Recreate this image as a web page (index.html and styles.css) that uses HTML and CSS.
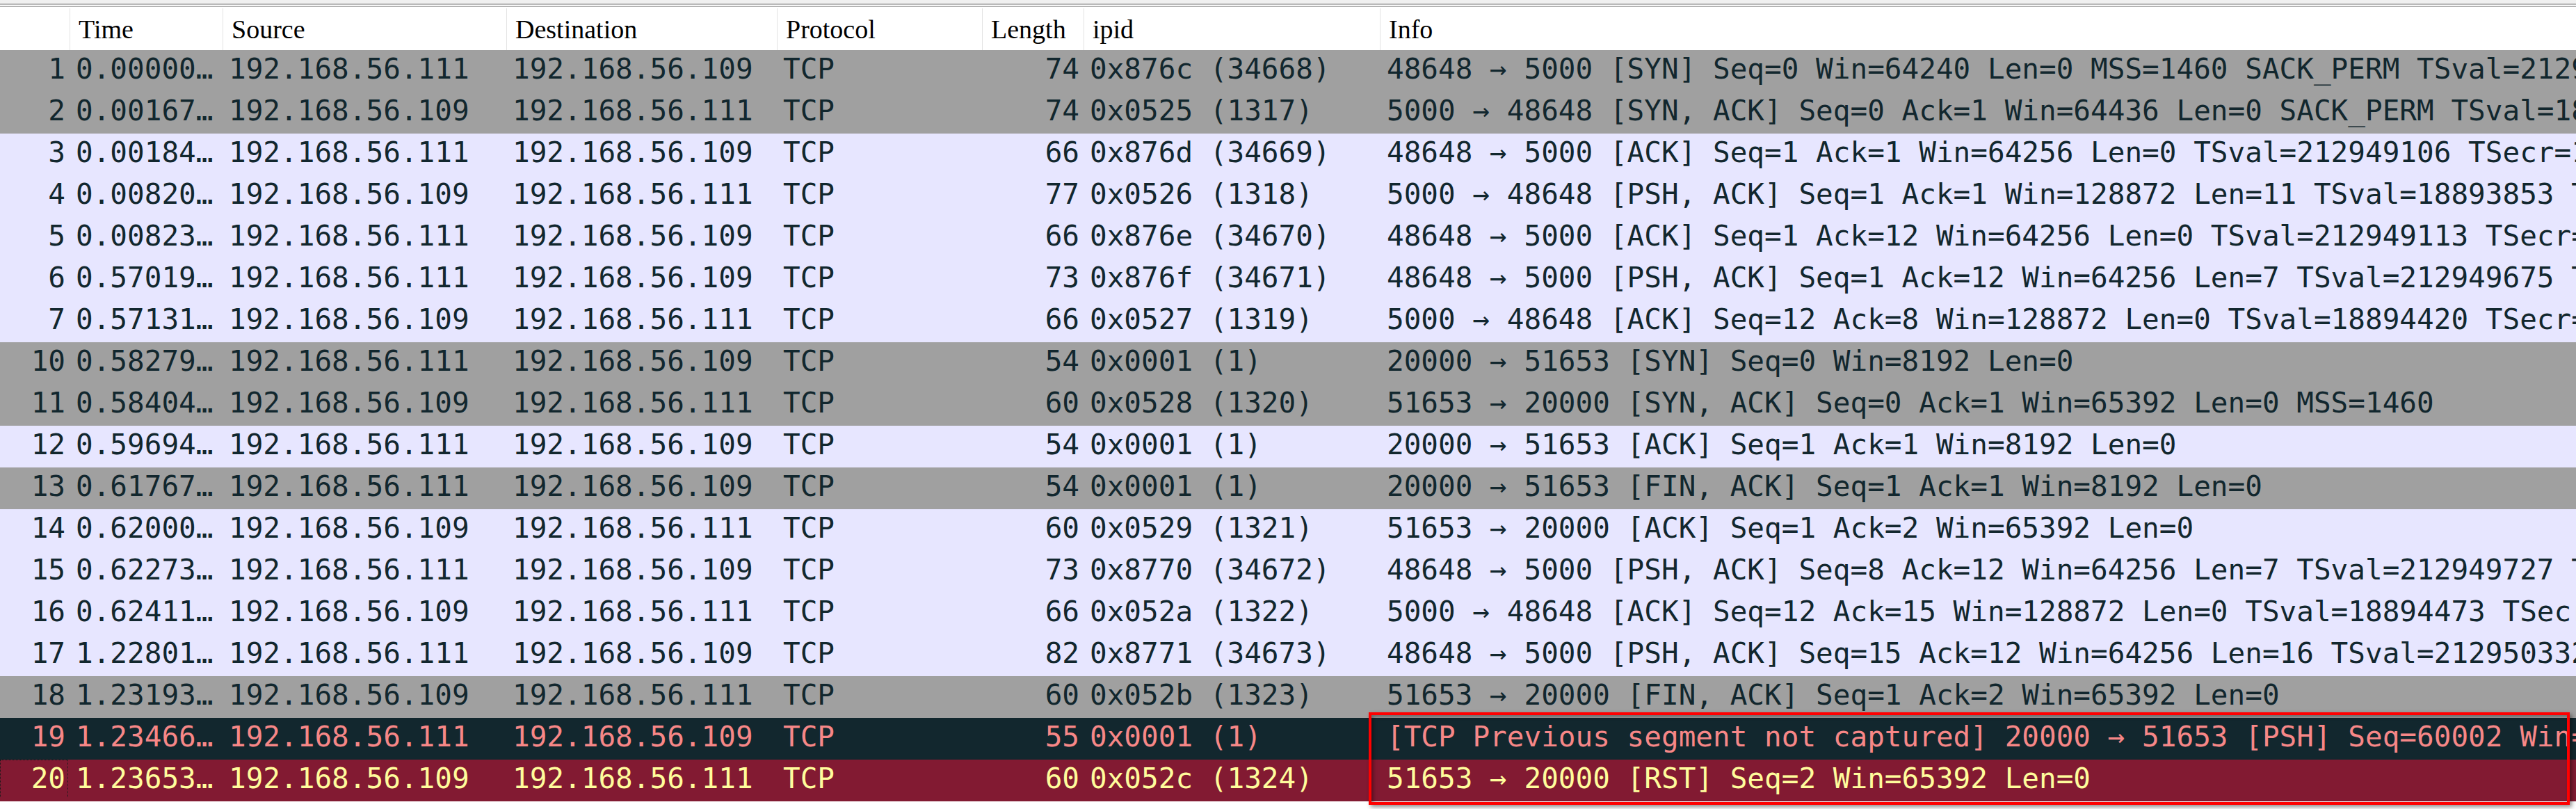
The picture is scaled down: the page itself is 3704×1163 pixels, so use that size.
FILE: index.html
```html
<!DOCTYPE html>
<html>
<head>
<meta charset="utf-8">
<link rel="stylesheet" href="styles.css">
</head>
<body>
<div class="pane">
  <div class="chrome"></div>
  <div class="chrome2"></div>
  <div class="head">
    <div class="hc"></div>
    <div class="hc">Time</div>
    <div class="hc">Source</div>
    <div class="hc">Destination</div>
    <div class="hc">Protocol</div>
    <div class="hc">Length</div>
    <div class="hc">ipid</div>
    <div class="hc last">Info</div>
  </div>
  <div class="list">
    <div class="row syn"><span class="c num">1</span><span class="c">0.00000…</span><span class="c">192.168.56.111</span><span class="c">192.168.56.109</span><span class="c">TCP</span><span class="c num">74</span><span class="c">0x876c (34668)</span><span class="c info">48648 → 5000 [SYN] Seq=0 Win=64240 Len=0 MSS=1460 SACK_PERM TSval=212949105 TSecr=0 WS=128</span></div>
    <div class="row syn"><span class="c num">2</span><span class="c">0.00167…</span><span class="c">192.168.56.109</span><span class="c">192.168.56.111</span><span class="c">TCP</span><span class="c num">74</span><span class="c">0x0525 (1317)</span><span class="c info">5000 → 48648 [SYN, ACK] Seq=0 Ack=1 Win=64436 Len=0 SACK_PERM TSval=18893852 TSecr=212949105</span></div>
    <div class="row tcp"><span class="c num">3</span><span class="c">0.00184…</span><span class="c">192.168.56.111</span><span class="c">192.168.56.109</span><span class="c">TCP</span><span class="c num">66</span><span class="c">0x876d (34669)</span><span class="c info">48648 → 5000 [ACK] Seq=1 Ack=1 Win=64256 Len=0 TSval=212949106 TSecr=18893852</span></div>
    <div class="row tcp"><span class="c num">4</span><span class="c">0.00820…</span><span class="c">192.168.56.109</span><span class="c">192.168.56.111</span><span class="c">TCP</span><span class="c num">77</span><span class="c">0x0526 (1318)</span><span class="c info">5000 → 48648 [PSH, ACK] Seq=1 Ack=1 Win=128872 Len=11 TSval=18893853 TSecr=212949106</span></div>
    <div class="row tcp"><span class="c num">5</span><span class="c">0.00823…</span><span class="c">192.168.56.111</span><span class="c">192.168.56.109</span><span class="c">TCP</span><span class="c num">66</span><span class="c">0x876e (34670)</span><span class="c info">48648 → 5000 [ACK] Seq=1 Ack=12 Win=64256 Len=0 TSval=212949113 TSecr=18893853</span></div>
    <div class="row tcp"><span class="c num">6</span><span class="c">0.57019…</span><span class="c">192.168.56.111</span><span class="c">192.168.56.109</span><span class="c">TCP</span><span class="c num">73</span><span class="c">0x876f (34671)</span><span class="c info">48648 → 5000 [PSH, ACK] Seq=1 Ack=12 Win=64256 Len=7 TSval=212949675 TSecr=18893853</span></div>
    <div class="row tcp"><span class="c num">7</span><span class="c">0.57131…</span><span class="c">192.168.56.109</span><span class="c">192.168.56.111</span><span class="c">TCP</span><span class="c num">66</span><span class="c">0x0527 (1319)</span><span class="c info">5000 → 48648 [ACK] Seq=12 Ack=8 Win=128872 Len=0 TSval=18894420 TSecr=212949675</span></div>
    <div class="row syn"><span class="c num">10</span><span class="c">0.58279…</span><span class="c">192.168.56.111</span><span class="c">192.168.56.109</span><span class="c">TCP</span><span class="c num">54</span><span class="c">0x0001 (1)</span><span class="c info">20000 → 51653 [SYN] Seq=0 Win=8192 Len=0</span></div>
    <div class="row syn"><span class="c num">11</span><span class="c">0.58404…</span><span class="c">192.168.56.109</span><span class="c">192.168.56.111</span><span class="c">TCP</span><span class="c num">60</span><span class="c">0x0528 (1320)</span><span class="c info">51653 → 20000 [SYN, ACK] Seq=0 Ack=1 Win=65392 Len=0 MSS=1460</span></div>
    <div class="row tcp"><span class="c num">12</span><span class="c">0.59694…</span><span class="c">192.168.56.111</span><span class="c">192.168.56.109</span><span class="c">TCP</span><span class="c num">54</span><span class="c">0x0001 (1)</span><span class="c info">20000 → 51653 [ACK] Seq=1 Ack=1 Win=8192 Len=0</span></div>
    <div class="row syn"><span class="c num">13</span><span class="c">0.61767…</span><span class="c">192.168.56.111</span><span class="c">192.168.56.109</span><span class="c">TCP</span><span class="c num">54</span><span class="c">0x0001 (1)</span><span class="c info">20000 → 51653 [FIN, ACK] Seq=1 Ack=1 Win=8192 Len=0</span></div>
    <div class="row tcp"><span class="c num">14</span><span class="c">0.62000…</span><span class="c">192.168.56.109</span><span class="c">192.168.56.111</span><span class="c">TCP</span><span class="c num">60</span><span class="c">0x0529 (1321)</span><span class="c info">51653 → 20000 [ACK] Seq=1 Ack=2 Win=65392 Len=0</span></div>
    <div class="row tcp"><span class="c num">15</span><span class="c">0.62273…</span><span class="c">192.168.56.111</span><span class="c">192.168.56.109</span><span class="c">TCP</span><span class="c num">73</span><span class="c">0x8770 (34672)</span><span class="c info">48648 → 5000 [PSH, ACK] Seq=8 Ack=12 Win=64256 Len=7 TSval=212949727 TSecr=18894420</span></div>
    <div class="row tcp"><span class="c num">16</span><span class="c">0.62411…</span><span class="c">192.168.56.109</span><span class="c">192.168.56.111</span><span class="c">TCP</span><span class="c num">66</span><span class="c">0x052a (1322)</span><span class="c info">5000 → 48648 [ACK] Seq=12 Ack=15 Win=128872 Len=0 TSval=18894473 TSecr=212949727</span></div>
    <div class="row tcp"><span class="c num">17</span><span class="c">1.22801…</span><span class="c">192.168.56.111</span><span class="c">192.168.56.109</span><span class="c">TCP</span><span class="c num">82</span><span class="c">0x8771 (34673)</span><span class="c info">48648 → 5000 [PSH, ACK] Seq=15 Ack=12 Win=64256 Len=16 TSval=212950332 TSecr=18894473</span></div>
    <div class="row syn"><span class="c num">18</span><span class="c">1.23193…</span><span class="c">192.168.56.109</span><span class="c">192.168.56.111</span><span class="c">TCP</span><span class="c num">60</span><span class="c">0x052b (1323)</span><span class="c info">51653 → 20000 [FIN, ACK] Seq=1 Ack=2 Win=65392 Len=0</span></div>
    <div class="row bad"><span class="c num">19</span><span class="c">1.23466…</span><span class="c">192.168.56.111</span><span class="c">192.168.56.109</span><span class="c">TCP</span><span class="c num">55</span><span class="c">0x0001 (1)</span><span class="c info">[TCP Previous segment not captured] 20000 → 51653 [PSH] Seq=60002 Win=8192 Len=1</span></div>
    <div class="row rst"><span class="c num focus">20</span><span class="c">1.23653…</span><span class="c">192.168.56.109</span><span class="c">192.168.56.111</span><span class="c">TCP</span><span class="c num">60</span><span class="c">0x052c (1324)</span><span class="c info">51653 → 20000 [RST] Seq=2 Win=65392 Len=0</span></div>
    <div class="mark"></div>
  </div>
</div>
</body>
</html>
```
FILE: styles.css
```css
html, body {
  margin: 0;
  padding: 0;
  background: #ffffff;
}
body {
  width: 3704px;
  height: 1163px;
  overflow: hidden;
}
.pane {
  width: 3704px;
}
.chrome {
  height: 5px;
  background: #f0f0f0;
  border-bottom: 2px solid #b9b9b9;
}
.chrome2 {
  height: 2px;
  background: #f7f7f7;
  border-bottom: 1px solid #a8a8a8;
}
.head, .row {
  display: grid;
  grid-template-columns: 101px 220px 408px 389px 295px 146px 426px 1719px;
}
.head {
  height: 62px;
  box-sizing: border-box;
  padding-top: 2px;
  background: #fff;
  font-family: "Liberation Serif", "Times New Roman", serif;
  font-size: 38px;
  color: #000;
}
.hc {
  line-height: 58px;
  padding-top: 1px;
  padding-left: 12px;
  border-right: 1px solid #e3e3e3;
  white-space: nowrap;
  overflow: hidden;
}
.hc.last {
  border-right: none;
}
.list {
  position: relative;
}
.row {
  height: 60px;
  box-sizing: border-box;
  padding-bottom: 6px;
  line-height: 54px;
  font-family: "DejaVu Sans Mono", monospace;
  font-size: 41px;
  color: #12272e;
  white-space: nowrap;
}
.c {
  padding: 0 7px 0 8px;
  overflow: hidden;
}
.c.num {
  text-align: right;
}
.c.info {
  padding-left: 9px;
  overflow: hidden;
}
.syn { background: #a0a0a0; }
.tcp { background: #e7e6ff; }
.bad { background: #12272e; color: #f78787; }
.rst { background: #821a32; color: #fffc9c; }
.focus {
  position: relative;
}
.focus::after {
  content: "";
  position: absolute;
  left: 0;
  top: 0;
  width: 96px;
  height: 58px;
  border: 1px dotted #1a1a1a;
}
.mark {
  position: absolute;
  left: 1968px;
  top: 952px;
  width: 1727px;
  height: 133px;
  box-sizing: border-box;
  border: 4px solid #ff0000;
  box-shadow: 3px 3px 6px rgba(0, 0, 0, 0.45), inset 3px 3px 5px rgba(0, 0, 0, 0.35);
}
```
